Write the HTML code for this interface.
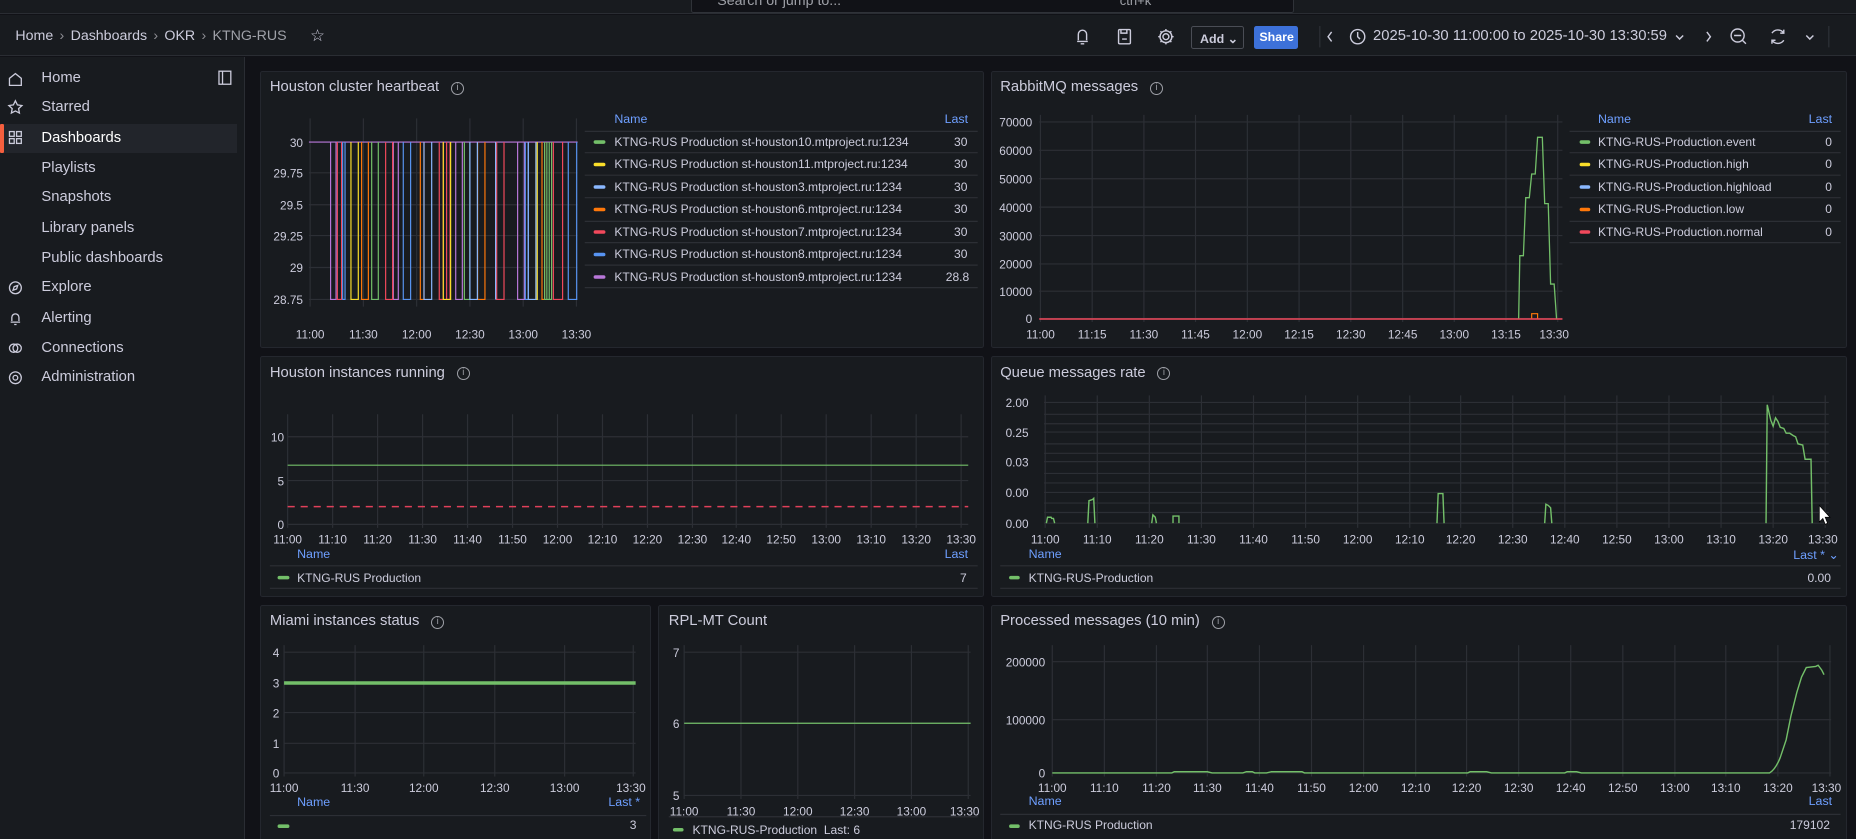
<!DOCTYPE html>
<html><head><meta charset="utf-8">
<style>
*{box-sizing:border-box;margin:0;padding:0}
html,body{width:1856px;height:839px;overflow:hidden;background:#111217}
#w{zoom:1.18367;position:relative;width:1568px;height:709px;font-family:"Liberation Sans",sans-serif;color:#ccccdc;background:#111217;overflow:hidden}
.a{position:absolute;white-space:nowrap}
.top{left:0;top:0;width:1568px;height:12px;background:#181b1f;border-bottom:1px solid #2a2d33}
.bc{left:0;top:13px;width:1568px;height:34px;background:#181b1f;border-bottom:1px solid #2a2d33}
.side{left:0;top:48px;width:207px;height:661px;background:#181b1f;border-right:1px solid #2a2d33}
.si{font-size:12.5px;color:#ccccdc}
.p{position:absolute;background:#181b1f;border:1px solid #24272e;border-radius:2px}
.pt{font-size:12.5px;color:#ccccdc;font-weight:500}
.info{display:inline-block;width:11px;height:11px;border:1px solid #9fa1a8;border-radius:50%;font-size:8px;text-align:center;line-height:9px;color:#9fa1a8;margin-left:10px;vertical-align:1px}
.lg{font-size:10.2px;color:#ccccdc}
.ln{font-size:10.5px;color:#6e9fff}
svg text{font-family:"Liberation Sans",sans-serif;font-size:10px;fill:#ccccdc}
</style></head><body><div id="w">
<div class="a top"></div>
<div class="a" style="left:584px;top:-12px;width:509px;height:23px;border:1px solid #2f3238;border-radius:2px;background:#111217"></div>
<div class="a" style="left:606px;top:-6px;font-size:12px;color:#9fa1a8">Search or jump to...</div>
<div class="a" style="left:946px;top:-6px;font-size:11px;color:#9fa1a8">ctrl+k</div>
<div class="a bc"></div>
<div class="a" style="left:13px;top:24px;font-size:12px;color:#ccccdc">Home <span style="color:#8e8e94;margin:0 2px">›</span> Dashboards <span style="color:#8e8e94;margin:0 2px">›</span> OKR <span style="color:#8e8e94;margin:0 2px">›</span> <span style="color:#9fa1a8">KTNG-RUS</span></div>
<div class="a" style="left:262px;top:22px;font-size:14px;color:#ccccdc">☆</div>
<svg class="a" style="left:0;top:0" width="1568" height="48" fill="none" stroke="#ccccdc" stroke-width="1.2">
<path d="M910 35h9M911 34v-5a3.5 3.5 0 0 1 7 0v5M913 37h3"/>
<rect x="945" y="25" width="10" height="12" rx="1"/><path d="M947 25v3h5v-3M948 33h4"/>
<circle cx="985" cy="31" r="2.5"/><circle cx="985" cy="31" r="5"/><path d="M985 24.5v2M985 35.5v2M978.5 31h2M989.5 31h2M980.4 26.4l1.4 1.4M988.2 34.2l1.4 1.4M980.4 35.6l1.4-1.4M988.2 27.8l1.4-1.4"/>
<path d="M1125 27l-3 4 3 4M1442 27l3 4-3 4M1416 30l3 3 3-3M1526 30l3 3 3-3" />
<circle cx="1147" cy="31" r="6"/><path d="M1147 27v4l2 2"/>
<circle cx="1468" cy="30" r="5.5"/><path d="M1465 30h6M1472 34l3 3"/>
<path d="M1497 28a6 6 0 0 1 10 0M1507 34a6 6 0 0 1 -10 0M1507 25v3h-3M1497 37v-3h3"/>
<path d="M1115 22v18M1545 22v18" stroke="#2a2d33"/>
</svg>
<div class="a" style="left:1006px;top:22px;width:45px;height:19px;border:1px solid #4a4d55;border-radius:2px;font-size:10.5px;color:#ccccdc;padding:3px 0 0 7px;font-weight:bold">Add ⌄</div>
<div class="a" style="left:1059px;top:22px;width:38px;height:19px;background:#3d71d9;border-radius:2px;font-size:10.5px;color:#fff;padding:3px 0 0 5px;font-weight:bold">Share</div>
<div class="a" style="left:1160px;top:24px;font-size:12.5px;color:#ccccdc">2025-10-30 11:00:00 to 2025-10-30 13:30:59</div>

<div class="a side"></div>
<div class="a" style="left:0;top:105px;width:200px;height:24px;background:#22252b"></div>
<div class="a" style="left:0;top:105px;width:3px;height:24px;background:#f55f3e;border-radius:1px"></div>
<svg class="a" style="left:0;top:48px" width="207" height="300" fill="none" stroke="#ccccdc" stroke-width="1.1">
<path d="M8 24v-6l5-4 5 4v6z"/>
<path d="M13 37l1.7 3.5 3.8.5-2.8 2.6.7 3.8-3.4-1.8-3.4 1.8.7-3.8-2.8-2.6 3.8-.5z"/>
<rect x="8" y="63" width="4" height="4"/><rect x="14" y="63" width="4" height="4"/><rect x="8" y="69" width="4" height="4"/><rect x="14" y="69" width="4" height="4"/>
<circle cx="13" cy="195" r="5"/><path d="M11 197l1-3 3-1-1 3z"/>
<path d="M9 224h8M10 223v-3a3 3 0 0 1 6 0v3M12 226h2"/>
<circle cx="11.5" cy="246" r="3.5"/><circle cx="14.5" cy="246" r="3.5"/>
<circle cx="13" cy="271" r="2"/><circle cx="13" cy="271" r="5"/>
<rect x="185" y="12" width="10" height="11"/><path d="M188 12v11"/>
</svg>
<div class="a si" style="left:35px;top:59px">Home</div>
<div class="a si" style="left:35px;top:84px">Starred</div>
<div class="a si" style="left:35px;top:110px;color:#fff">Dashboards</div>
<div class="a si" style="left:35px;top:135px">Playlists</div>
<div class="a si" style="left:35px;top:160px">Snapshots</div>
<div class="a si" style="left:35px;top:186px">Library panels</div>
<div class="a si" style="left:35px;top:211px">Public dashboards</div>
<div class="a si" style="left:35px;top:236px">Explore</div>
<div class="a si" style="left:35px;top:262px">Alerting</div>
<div class="a si" style="left:35px;top:287px">Connections</div>
<div class="a si" style="left:35px;top:312px">Administration</div>

<div class="p" style="left:220px;top:60px;width:611px;height:234px"></div>
<div class="p" style="left:837px;top:60px;width:723px;height:234px"></div>
<div class="p" style="left:220px;top:301px;width:611px;height:203px"></div>
<div class="p" style="left:837px;top:301px;width:723px;height:203px"></div>
<div class="p" style="left:220px;top:511px;width:330px;height:210px"></div>
<div class="p" style="left:556px;top:511px;width:275px;height:210px"></div>
<div class="p" style="left:837px;top:511px;width:723px;height:210px"></div>

<div class="a pt" style="left:228px;top:67px">Houston cluster heartbeat<span class="info">i</span></div>
<div class="a pt" style="left:845px;top:67px">RabbitMQ messages<span class="info">i</span></div>
<div class="a pt" style="left:228px;top:308px">Houston instances running<span class="info">i</span></div>
<div class="a pt" style="left:845px;top:308px">Queue messages rate<span class="info">i</span></div>
<div class="a pt" style="left:228px;top:518px">Miami instances status<span class="info">i</span></div>
<div class="a pt" style="left:565px;top:518px">RPL-MT Count</div>
<div class="a pt" style="left:845px;top:518px">Processed messages (10 min)<span class="info">i</span></div>

<svg class="a" style="left:0;top:0" width="1568" height="709" fill="none">
<g stroke="#2c2f35" stroke-width="1">
<path d="M261 120H488M261 146H488M261 173H488M261 199H488M261 226H488M261 253H488"/>
<path d="M262 100V259M307 100V259M352 100V259M397 100V259M442 100V259M487 100V259"/>
<path d="M494 111H826M494 129H826M494 148H826M494 167H826M494 187H826M494 205H826M494 224H826M494 243H826"/>
<path d="M878 103H1320M878 127H1320M878 151H1320M878 175H1320M878 199H1320M878 223H1320M878 246H1320M878 269H1320"/>
<path d="M879 97V272M922.7 97V272M966.4 97V272M1010 97V272M1053.8 97V272M1097.5 97V272M1141.2 97V272M1185 97V272M1228.6 97V272M1272.3 97V272M1316 97V272"/>
<path d="M1326 111H1555M1326 129H1555M1326 148H1555M1326 167H1555M1326 187H1555M1326 205H1555"/>
<path d="M243 369H818M243 406H818M243 443H818"/>
<path d="M243 350V446M281 350V446M319 350V446M357 350V446M395 350V446M433 350V446M471 350V446M509 350V446M547 350V446M585 350V446M622 350V446M660 350V446M698 350V446M736 350V446M774 350V446M812 350V446"/>
<path d="M228 478H826M228 497H826"/>
<path d="M882 340H1545M882 350H1545M882 358H1545M882 365H1545M882 375H1545M882 383H1545M882 390H1545M882 400H1545M882 408H1545M882 416H1545M882 425H1545M882 433H1545M882 442H1545"/>
<path d="M883 334V446M927 334V446M971 334V446M1015 334V446M1059 334V446M1103 334V446M1147 334V446M1191 334V446M1234 334V446M1278 334V446M1322 334V446M1366 334V446M1410 334V446M1454 334V446M1498 334V446M1542 334V446"/>
<path d="M845 478H1555M845 497H1555"/>
<path d="M240 551H537M240 577H537M240 602H537M240 628H537M240 653H537"/>
<path d="M240 545V656M300 545V656M358 545V656M418 545V656M477 545V656M535 545V656"/>
<path d="M228 689H546"/>
<path d="M578 551H820M578 611H820M578 672H820"/>
<path d="M578 545V675M626 545V675M674 545V675M722 545V675M770 545V675M818 545V675"/>
<path d="M565 690H826"/>
<path d="M889 559H1547M889 608H1547M889 653H1547"/>
<path d="M889 545V656M933 545V656M977 545V656M1020 545V656M1064 545V656M1108 545V656M1152 545V656M1196 545V656M1239 545V656M1283 545V656M1327 545V656M1371 545V656M1415 545V656M1458 545V656M1502 545V656M1546 545V656"/>
<path d="M845 688H1555"/>
</g>
<path d="M261 120H488" stroke="#b877d9"/>
<g stroke-width="1">
<path stroke="#b877d9" d="M279.3 120V253H283.9V120M332.3 120V253H336.5V120M385 120V253H390.6V120M437.3 120V253H443V120"/>
<path stroke="#f2495c" d="M285 120V253H288.6V120M325.8 120V253H331.7V120M371.1 120V253H374.5V120M377.3 120V253H380.2V120M419.6 120V253H425.8V120M467.5 120V253H475.3V120"/>
<path stroke="#5794f2" d="M289.5 120V253H291.5V120M340.7 120V253H346.9V120M443.8 120V253H446.3V120M480.1 120V253H487.2V120"/>
<path stroke="#fade2a" d="M296.5 120V253H302.7V120M374.5 120V253H380.7V120M452.8 120V253H453.9V120"/>
<path stroke="#ff780a" d="M305.5 120V253H311.2V120M355.1 120V253H358.2V120M403.5 120V253H409.7V120M457.9 120V253H460.1V120"/>
<path stroke="#73bf69" d="M314 120V253H319.6V120M392.3 120V253H397V120M460.1 120V253H466V120M462 120V253M464 120V253"/>
<path stroke="#8ab8ff" d="M358.2 120V253H364.7V120M397 120V253H403.3V120M418.7 120V253M446.3 120V253H452.8V120"/>
</g>
<path stroke="#f2495c" stroke-width="1.3" d="M878 269.5H1320"/>
<path stroke="#ff780a" d="M1294 269V265H1299V269"/>
<path stroke="#73bf69" stroke-width="1.1" d="M1283 269L1284 216H1287L1289 167H1292L1294 147H1297L1299 116H1303L1305 172H1308L1310 240H1313L1315 269"/>
<path stroke="#73bf69" d="M243 393H818"/>
<path stroke="#e0405a" stroke-width="1.2" stroke-dasharray="6 5" d="M243 428H818"/>
<path stroke="#73bf69" stroke-width="1.2" d="M884 442L885 437H888L888.5 438H890L891 442M919 442L920 423L923 422L924 421L925 442M973 442L974 435L976 437L977 442M991 442V436H996V442M1214 442L1215 417H1219L1220 442M1305 442L1306 426L1308 427L1310 429L1311 442M1492 442L1493 342L1496 355L1498 360L1500 353L1502 356L1504 361L1507 362L1509 366L1512 366L1515 368L1517 369L1519 375L1523 376L1525 388L1530 388L1531 442"/>
<path stroke="#73bf69" stroke-width="3" d="M240 577H537"/>
<path stroke="#73bf69" d="M578 611H820"/>
<path stroke="#73bf69" stroke-width="1.2" d="M889 653H990L992 652H1020L1024 653H1050L1053 652H1058L1060 653H1070L1074 652H1100L1102 653H1240L1242 652H1256L1260 653H1322L1324 652H1332L1336 653H1495Q1500 650 1504 640L1509 625L1513 605L1518 585L1522 572L1526 564L1534 563L1536 562L1539 566L1541 570"/>
<g stroke-width="3" stroke-linecap="round">
<path stroke="#73bf69" d="M503 120H510"/><path stroke="#fade2a" d="M503 139H510"/><path stroke="#8ab8ff" d="M503 158H510"/><path stroke="#ff780a" d="M503 177H510"/><path stroke="#f2495c" d="M503 196H510"/><path stroke="#5794f2" d="M503 215H510"/><path stroke="#b877d9" d="M503 234H510"/>
<path stroke="#73bf69" d="M1336 120H1342"/><path stroke="#fade2a" d="M1336 139H1342"/><path stroke="#8ab8ff" d="M1336 158H1342"/><path stroke="#ff780a" d="M1336 177H1342"/><path stroke="#f2495c" d="M1336 196H1342"/>
<path stroke="#73bf69" d="M236 488H243"/><path stroke="#73bf69" d="M854 488H860"/><path stroke="#73bf69" d="M236 698H243"/><path stroke="#73bf69" d="M570 701H576"/><path stroke="#73bf69" d="M854 698H860"/>
</g>
<g text-anchor="end">
<text x="256" y="124">30</text><text x="256" y="150">29.75</text><text x="256" y="177">29.5</text><text x="256" y="203">29.25</text><text x="256" y="230">29</text><text x="256" y="257">28.75</text>
<text x="872" y="107">70000</text><text x="872" y="131">60000</text><text x="872" y="155">50000</text><text x="872" y="179">40000</text><text x="872" y="203">30000</text><text x="872" y="227">20000</text><text x="872" y="250">10000</text><text x="872" y="273">0</text>
<text x="240" y="373">10</text><text x="240" y="410">5</text><text x="240" y="447">0</text>
<text x="869" y="344">2.00</text><text x="869" y="369">0.25</text><text x="869" y="394">0.03</text><text x="869" y="420">0.00</text><text x="869" y="446">0.00</text>
<text x="236" y="555">4</text><text x="236" y="581">3</text><text x="236" y="606">2</text><text x="236" y="632">1</text><text x="236" y="657">0</text>
<text x="574" y="555">7</text><text x="574" y="615">6</text><text x="574" y="676">5</text>
<text x="883" y="563">200000</text><text x="883" y="612">100000</text><text x="883" y="657">0</text>
</g>
<g text-anchor="middle">
<text x="262" y="286">11:00</text><text x="307" y="286">11:30</text><text x="352" y="286">12:00</text><text x="397" y="286">12:30</text><text x="442" y="286">13:00</text><text x="487" y="286">13:30</text>
<text x="879" y="286">11:00</text><text x="922.7" y="286">11:15</text><text x="966.4" y="286">11:30</text><text x="1010" y="286">11:45</text><text x="1053.8" y="286">12:00</text><text x="1097.5" y="286">12:15</text><text x="1141.2" y="286">12:30</text><text x="1185" y="286">12:45</text><text x="1228.6" y="286">13:00</text><text x="1272.3" y="286">13:15</text><text x="1313" y="286">13:30</text>
<text x="243" y="459">11:00</text><text x="281" y="459">11:10</text><text x="319" y="459">11:20</text><text x="357" y="459">11:30</text><text x="395" y="459">11:40</text><text x="433" y="459">11:50</text><text x="471" y="459">12:00</text><text x="509" y="459">12:10</text><text x="547" y="459">12:20</text><text x="585" y="459">12:30</text><text x="622" y="459">12:40</text><text x="660" y="459">12:50</text><text x="698" y="459">13:00</text><text x="736" y="459">13:10</text><text x="774" y="459">13:20</text><text x="812" y="459">13:30</text>
<text x="883" y="459">11:00</text><text x="927" y="459">11:10</text><text x="971" y="459">11:20</text><text x="1015" y="459">11:30</text><text x="1059" y="459">11:40</text><text x="1103" y="459">11:50</text><text x="1147" y="459">12:00</text><text x="1191" y="459">12:10</text><text x="1234" y="459">12:20</text><text x="1278" y="459">12:30</text><text x="1322" y="459">12:40</text><text x="1366" y="459">12:50</text><text x="1410" y="459">13:00</text><text x="1454" y="459">13:10</text><text x="1498" y="459">13:20</text><text x="1540" y="459">13:30</text>
<text x="240" y="669">11:00</text><text x="300" y="669">11:30</text><text x="358" y="669">12:00</text><text x="418" y="669">12:30</text><text x="477" y="669">13:00</text><text x="533" y="669">13:30</text>
<text x="578" y="689">11:00</text><text x="626" y="689">11:30</text><text x="674" y="689">12:00</text><text x="722" y="689">12:30</text><text x="770" y="689">13:00</text><text x="815" y="689">13:30</text>
<text x="889" y="669">11:00</text><text x="933" y="669">11:10</text><text x="977" y="669">11:20</text><text x="1020" y="669">11:30</text><text x="1064" y="669">11:40</text><text x="1108" y="669">11:50</text><text x="1152" y="669">12:00</text><text x="1196" y="669">12:10</text><text x="1239" y="669">12:20</text><text x="1283" y="669">12:30</text><text x="1327" y="669">12:40</text><text x="1371" y="669">12:50</text><text x="1415" y="669">13:00</text><text x="1458" y="669">13:10</text><text x="1502" y="669">13:20</text><text x="1543" y="669">13:30</text>
</g>
<path d="M1537 427V441L1540 438L1542 443L1544 442L1542 437H1546Z" fill="#fff" stroke="#000" stroke-width=".6"/>
</svg>

<div class="a ln" style="left:519px;top:95px">Name</div><div class="a ln" style="left:798px;top:95px">Last</div>
<div class="a lg" style="left:519px;top:114px">KTNG-RUS Production st-houston10.mtproject.ru:1234</div><div class="a lg" style="left:806px;top:114px">30</div>
<div class="a lg" style="left:519px;top:133px">KTNG-RUS Production st-houston11.mtproject.ru:1234</div><div class="a lg" style="left:806px;top:133px">30</div>
<div class="a lg" style="left:519px;top:152px">KTNG-RUS Production st-houston3.mtproject.ru:1234</div><div class="a lg" style="left:806px;top:152px">30</div>
<div class="a lg" style="left:519px;top:171px">KTNG-RUS Production st-houston6.mtproject.ru:1234</div><div class="a lg" style="left:806px;top:171px">30</div>
<div class="a lg" style="left:519px;top:190px">KTNG-RUS Production st-houston7.mtproject.ru:1234</div><div class="a lg" style="left:806px;top:190px">30</div>
<div class="a lg" style="left:519px;top:209px">KTNG-RUS Production st-houston8.mtproject.ru:1234</div><div class="a lg" style="left:806px;top:209px">30</div>
<div class="a lg" style="left:519px;top:228px">KTNG-RUS Production st-houston9.mtproject.ru:1234</div><div class="a lg" style="left:799px;top:228px">28.8</div>

<div class="a ln" style="left:1350px;top:95px">Name</div><div class="a ln" style="left:1528px;top:95px">Last</div>
<div class="a lg" style="left:1350px;top:114px">KTNG-RUS-Production.event</div><div class="a lg" style="left:1542px;top:114px">0</div>
<div class="a lg" style="left:1350px;top:133px">KTNG-RUS-Production.high</div><div class="a lg" style="left:1542px;top:133px">0</div>
<div class="a lg" style="left:1350px;top:152px">KTNG-RUS-Production.highload</div><div class="a lg" style="left:1542px;top:152px">0</div>
<div class="a lg" style="left:1350px;top:171px">KTNG-RUS-Production.low</div><div class="a lg" style="left:1542px;top:171px">0</div>
<div class="a lg" style="left:1350px;top:190px">KTNG-RUS-Production.normal</div><div class="a lg" style="left:1542px;top:190px">0</div>

<div class="a ln" style="left:251px;top:462px">Name</div><div class="a ln" style="left:798px;top:462px">Last</div>
<div class="a lg" style="left:251px;top:482px">KTNG-RUS Production</div><div class="a lg" style="left:811px;top:482px">7</div>

<div class="a ln" style="left:869px;top:462px">Name</div><div class="a ln" style="left:1515px;top:462px">Last * ⌄</div>
<div class="a lg" style="left:869px;top:482px">KTNG-RUS-Production</div><div class="a lg" style="left:1527px;top:482px">0.00</div>

<div class="a ln" style="left:251px;top:672px">Name</div><div class="a ln" style="left:514px;top:672px">Last *</div>
<div class="a lg" style="left:532px;top:691px">3</div>

<div class="a lg" style="left:585px;top:695px">KTNG-RUS-Production&nbsp;&nbsp;Last: 6</div>

<div class="a ln" style="left:869px;top:671px">Name</div><div class="a ln" style="left:1528px;top:671px">Last</div>
<div class="a lg" style="left:869px;top:691px">KTNG-RUS Production</div><div class="a lg" style="left:1512px;top:691px">179102</div>
</div></body></html>
